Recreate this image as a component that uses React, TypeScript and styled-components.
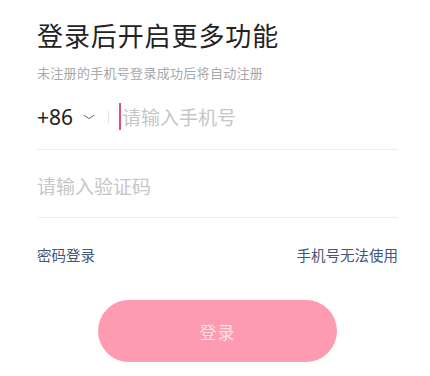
import React from "react";
import styled, { createGlobalStyle } from "styled-components";

const Global = createGlobalStyle`
  html, body { margin: 0; padding: 0; background: #fff; }
  body { font-family: "Noto Sans CJK SC", "Noto Sans", sans-serif; }
`;

const Page = styled.div`
  padding: 17px 32px 0 37px;
  display: flex;
  flex-direction: column;
`;

const Title = styled.h1`
  margin: 0;
  font-size: 26px;
  line-height: 36px;
  font-weight: 400;
  color: #222;
  letter-spacing: 0.9px;
`;

const Subtitle = styled.p`
  margin: 11px 0 0;
  font-size: 13px;
  line-height: 18px;
  color: #a8a8a8;
  letter-spacing: 0.3px;
`;

const Field = styled.div<{ $first?: boolean }>`
  height: 68px;
  box-sizing: border-box;
  padding-top: ${(p) => (p.$first ? 2 : 4)}px;
  display: flex;
  align-items: center;
  border-bottom: 1px solid #ececec;
`;

const Code = styled.span`
  font-family: "Noto Sans", sans-serif;
  font-size: 21px;
  color: #222;
`;

const Chevron = styled.svg`
  margin-left: 10px;
  width: 12px;
  height: 8px;
`;

const Divider = styled.span`
  width: 1px;
  height: 14px;
  background: #e6e6e6;
  margin-left: 13px;
`;

const Caret = styled.span`
  width: 2px;
  height: 27px;
  background: #e0507a;
  margin-left: 10px;
`;

const Placeholder = styled.span<{ $gap?: number }>`
  font-size: 19px;
  color: #c6c6c6;
  margin-left: ${(p) => p.$gap ?? 0}px;
`;

const Links = styled.div`
  display: flex;
  justify-content: space-between;
  margin-top: 26px;
`;

const LinkText = styled.span`
  font-size: 14.5px;
  color: #44557a;
`;

const Button = styled.button`
  align-self: center;
  margin-top: 35px;
  width: 239px;
  height: 62px;
  border: none;
  border-radius: 31px;
  background: #fe9bb0;
  color: #fee0e7;
  font-family: "Noto Sans CJK SC", sans-serif;
  font-size: 17px;
  letter-spacing: 1px;
`;

export default function App() {
  return (
    <>
      <Global />
      <Page>
        <Title>登录后开启更多功能</Title>
        <Subtitle>未注册的手机号登录成功后将自动注册</Subtitle>
        <Field $first>
          <Code>+86</Code>
          <Chevron viewBox="0 0 12 8">
            <path d="M0.8 2.2 L6 5.6 L11.2 2.2" fill="none" stroke="#666" strokeWidth="1" />
          </Chevron>
          <Divider />
          <Caret />
          <Placeholder $gap={1}>请输入手机号</Placeholder>
        </Field>
        <Field>
          <Placeholder>请输入验证码</Placeholder>
        </Field>
        <Links>
          <LinkText>密码登录</LinkText>
          <LinkText>手机号无法使用</LinkText>
        </Links>
        <Button>登录</Button>
      </Page>
    </>
  );
}
